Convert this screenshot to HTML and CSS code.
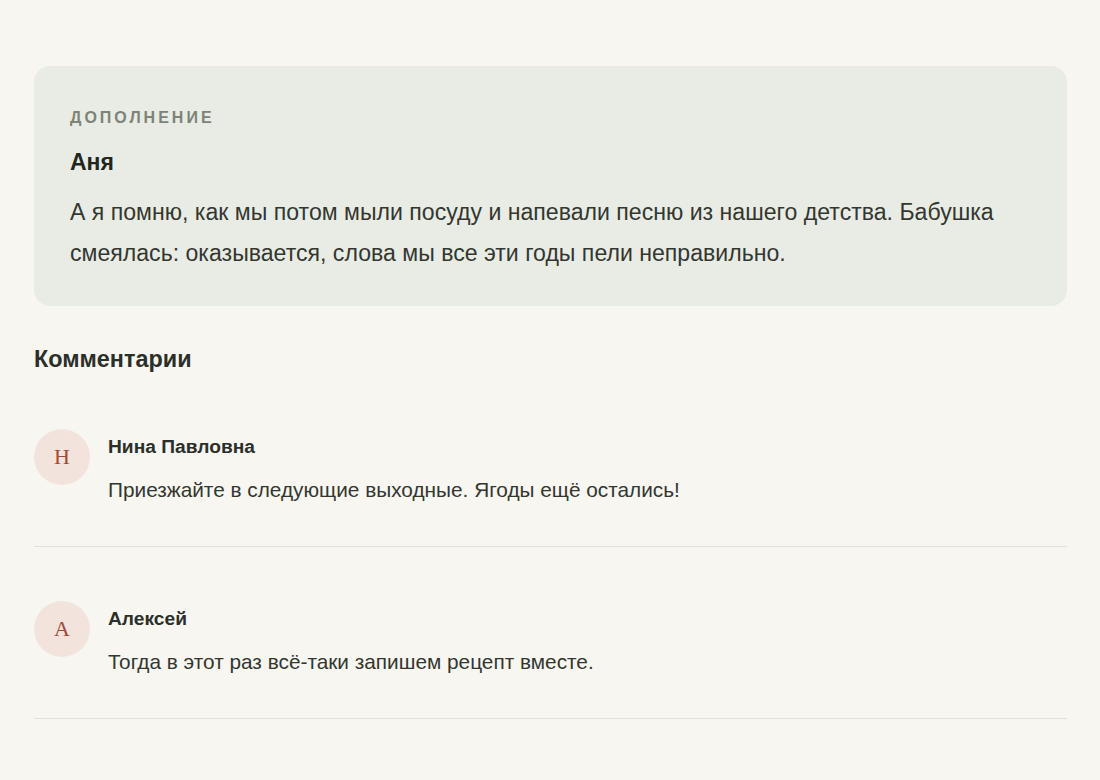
FILE: index.html
```html
<!DOCTYPE html>
<html lang="ru">
<head>
    <meta charset="UTF-8">
    <meta name="viewport" content="width=device-width, initial-scale=1.0">
    <title>Дополнение и комментарии</title>
    <link rel="stylesheet" href="styles.css">
</head>
<body>
    <div class="page">
        <section class="addition">
            <div class="addition-label">Дополнение</div>
            <div class="addition-author">Аня</div>
            <p class="addition-text">А я помню, как мы потом мыли посуду и напевали песню из нашего детства. Бабушка смеялась: оказывается, слова мы все эти годы пели неправильно.</p>
        </section>

        <h2 class="comments-title">Комментарии</h2>
        <div class="comments">
            <div class="comment">
                <div class="avatar">Н</div>
                <div class="comment-body">
                    <div class="comment-name">Нина Павловна</div>
                    <p class="comment-text">Приезжайте в следующие выходные. Ягоды ещё остались!</p>
                </div>
            </div>
            <div class="comment">
                <div class="avatar">А</div>
                <div class="comment-body">
                    <div class="comment-name">Алексей</div>
                    <p class="comment-text">Тогда в этот раз всё-таки запишем рецепт вместе.</p>
                </div>
            </div>
        </div>
    </div>
</body>
</html>
```

FILE: styles.css
```css
body {
    margin: 0;
    background-color: #f7f6f1;
    font-family: "Liberation Sans", Arial, sans-serif;
    color: #2b2f2a;
}
.page {
    padding: 66px 33px 40px 34px;
}
.addition {
    background: #e9ece5;
    border-radius: 16px;
    padding: 40px 36px 32px 36px;
}
.addition-label {
    font-size: 16px;
    font-weight: bold;
    letter-spacing: 3px;
    text-transform: uppercase;
    color: #7d8377;
    line-height: 24px;
}
.addition-author {
    font-size: 23px;
    font-weight: bold;
    margin-top: 19px;
    line-height: 26px;
    color: #22261f;
}
.addition-text {
    font-size: 23.1px;
    line-height: 41px;
    margin: 17px 0 0 0;
    color: #33372f;
}
.comments-title {
    font-size: 23.4px;
    font-weight: bold;
    margin: 40px 0 0 0;
    line-height: 26px;
    color: #2b2f2a;
}
.comments {
    margin-top: 3px;
}
.comment {
    display: flex;
    gap: 18px;
    padding: 54px 0 42px 0;
    border-bottom: 1px solid #e1e0da;
}
.avatar {
    width: 56px;
    height: 56px;
    border-radius: 50%;
    background: #f2e4dd;
    color: #a14a36;
    font-family: "Liberation Serif", "Times New Roman", serif;
    font-size: 22px;
    display: flex;
    align-items: center;
    justify-content: center;
    flex-shrink: 0;
}
.comment-name {
    font-size: 19.2px;
    font-weight: bold;
    line-height: 22px;
    margin-top: 7px;
    color: #2b2f2a;
}
.comment-text {
    font-size: 20.8px;
    line-height: 28px;
    margin: 18px 0 0 0;
    color: #33372f;
}
```
